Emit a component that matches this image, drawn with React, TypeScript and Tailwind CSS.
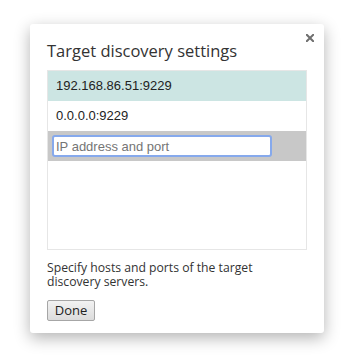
import React from "react";

export default function App() {
  const ubuntu = { fontFamily: '"Open Sans", "Noto Sans", sans-serif' };
  return (
    <div className="w-[360px] h-[362px] bg-white pt-[24px] pl-[30px]">
      <div className="relative w-[294px] h-[309px] bg-white rounded-[3px] shadow-[0_5px_16px_rgba(0,0,0,0.3)] px-[17px] pt-[16px]">
        <button className="absolute right-[10px] top-[10px] w-[8px] h-[8px] p-0" aria-label="Close">
          <svg width="8" height="8" viewBox="0 0 8 8" className="block">
            <path d="M0.8 0.8 L7.2 7.2 M7.2 0.8 L0.8 7.2" stroke="#6f6f6f" strokeWidth="2" strokeLinecap="square" />
          </svg>
        </button>
        <div className="text-[16.5px] leading-[22px] text-[#333] mb-[8px]" style={ubuntu}>
          Target discovery settings
        </div>
        <div
          className="h-[180px] border border-[#e6e6e6] flex flex-col"
          style={{ fontFamily: '"Liberation Sans", Arial, sans-serif' }}
        >
          <div className="h-[30px] bg-[#cce5e3] flex items-center pl-[8px] text-[13px] text-[#222]">
            192.168.86.51:9229
          </div>
          <div className="h-[30px] flex items-center pl-[8px] text-[13px] text-[#222]">
            0.0.0.0:9229
          </div>
          <div className="h-[30px] bg-[#c8c8c8] flex items-center pl-[4px]">
            <input
              className="w-[220px] h-[22px] bg-white border-2 border-[#86a9ec] rounded-[3px] px-[2px] text-[13px] text-[#222] outline-none placeholder:text-[#757575]"
              placeholder="IP address and port"
            />
          </div>
        </div>
        <div className="mt-[11px] text-[12.2px] leading-[14px] text-[#333]" style={ubuntu}>
          Specify hosts and ports of the target
          <br />
          discovery servers.
        </div>
        <button
          className="mt-[11px] h-[21px] w-[48px] text-[13px] leading-none text-[#222] border border-[#a6a6a6] rounded-[2px] bg-gradient-to-b from-[#f2f2f2] to-[#dcdcdc] flex items-center justify-center"
          style={ubuntu}
        >
          Done
        </button>
      </div>
    </div>
  );
}
